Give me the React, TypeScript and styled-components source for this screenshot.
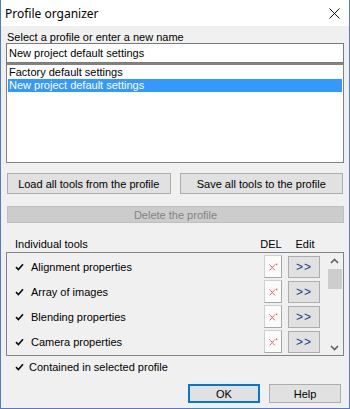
import styled, { createGlobalStyle } from 'styled-components'

const GlobalStyle = createGlobalStyle`
  html, body {
    margin: 0;
    padding: 0;
    background: #ffffff;
  }
  body {
    font-family: 'Liberation Sans', Arial, sans-serif;
    font-size: 11px;
    color: #000;
  }
`

const profiles = ['Factory default settings', 'New project default settings']
const selectedProfile = 1

const tools = [
  'Alignment properties',
  'Array of images',
  'Blending properties',
  'Camera properties',
]

function CheckIcon() {
  return (
    <svg width="9" height="8" viewBox="0 0 9 8">
      <path d="M1 4.2 L3.4 6.6 L8 1.2" fill="none" stroke="#111" strokeWidth="1.7" />
    </svg>
  )
}

function DelIcon() {
  return (
    <svg width="10" height="10" viewBox="0 0 10 10">
      <path
        d="M1.5 2.5 L7 8.5 M7 2.5 L1.5 8.5"
        fill="none"
        stroke="#c42b2b"
        strokeWidth="0.9"
        strokeDasharray="1.5 0.6"
      />
      <rect x="8.3" y="1.6" width="0.9" height="1.6" fill="#c42b2b" />
    </svg>
  )
}

function Chevron({ up }: { up: boolean }) {
  return (
    <svg width="9" height="6" viewBox="0 0 9 6">
      <path
        d={up ? 'M1 5 L4.5 1.5 L8 5' : 'M1 1 L4.5 4.5 L8 1'}
        fill="none"
        stroke="#606060"
        strokeWidth="1.6"
      />
    </svg>
  )
}

export default function App() {
  return (
    <>
      <GlobalStyle />
      <Window>
        <TitleBar>
          <Title>Profile organizer</Title>
          <CloseButton>
            <svg width="11" height="11" viewBox="0 0 11 11">
              <path d="M0.5 0.5 L10.5 10.5 M10.5 0.5 L0.5 10.5" stroke="#111" strokeWidth="1" />
            </svg>
          </CloseButton>
        </TitleBar>

        <Body>
          <Label>Select a profile or enter a new name</Label>
          <NameInput>New project default settings</NameInput>
          <ProfileList>
            {profiles.map((name, i) => (
              <ProfileItem key={name} selected={i === selectedProfile}>
                {name}
              </ProfileItem>
            ))}
          </ProfileList>

          <ButtonRow>
            <Button>Load all tools from the profile</Button>
            <Button>Save all tools to the profile</Button>
          </ButtonRow>

          <DeleteButton>Delete the profile</DeleteButton>

          <ToolsHeader>
            <HeaderName>Individual tools</HeaderName>
            <HeaderCol width={26}>DEL</HeaderCol>
            <HeaderCol width={34}>Edit</HeaderCol>
          </ToolsHeader>

          <ToolsBox>
            <ToolRows>
              {tools.map(name => (
                <ToolRow key={name}>
                  <CheckIcon />
                  <ToolName>{name}</ToolName>
                  <DelButton>
                    <DelIcon />
                  </DelButton>
                  <EditButton>&gt;&gt;</EditButton>
                </ToolRow>
              ))}
            </ToolRows>
            <ScrollBar>
              <ScrollArrow>
                <Chevron up />
              </ScrollArrow>
              <ScrollTrack>
                <ScrollThumb />
              </ScrollTrack>
              <ScrollArrow>
                <Chevron up={false} />
              </ScrollArrow>
            </ScrollBar>
          </ToolsBox>

          <Legend>
            <CheckIcon />
            <span>Contained in selected profile</span>
          </Legend>

          <Footer>
            <DialogButton isDefault>OK</DialogButton>
            <DialogButton>Help</DialogButton>
          </Footer>
        </Body>
      </Window>
    </>
  )
}

const Window = styled.div`
  width: 350px;
  height: 409px;
  box-sizing: border-box;
  border: 1px solid #4f7bc7;
  border-top: none;
  background: #f0f0f0;
  display: flex;
  flex-direction: column;
  overflow: hidden;
`

const TitleBar = styled.div`
  flex: none;
  height: 26px;
  background: #ffffff;
  display: flex;
  align-items: center;
  justify-content: space-between;
  padding: 0 8px 0 4px;
`

const Title = styled.div`
  font-family: 'Noto Sans', 'Open Sans', sans-serif;
  font-size: 12px;
  margin-top: 1px;
`

const CloseButton = styled.div`
  display: flex;
  align-items: center;
  margin-right: 1px;
`

const Body = styled.div`
  flex: 1;
  display: flex;
  flex-direction: column;
  padding: 6px 5px 0 5px;
`

const Label = styled.div`
  flex: none;
  height: 11px;
  line-height: 11px;
  padding-left: 1px;
`

const NameInput = styled.div`
  flex: none;
  height: 20px;
  box-sizing: border-box;
  border: 1px solid #7a7a7a;
  background: #fff;
  padding-left: 2px;
  line-height: 18px;
`

const ProfileList = styled.div`
  flex: none;
  height: 100px;
  box-sizing: border-box;
  border: 1px solid #828282;
  border-top: 2px solid #828282;
  background: #fff;
  padding: 1px 1px;
`

const ProfileItem = styled.div<{ selected: boolean }>`
  height: 13px;
  line-height: 13px;
  padding-left: 1px;
  background: ${p => (p.selected ? '#3399ff' : 'transparent')};
  color: ${p => (p.selected ? '#fff' : '#000')};
`

const ButtonRow = styled.div`
  flex: none;
  display: flex;
  gap: 9px;
  margin: 10px 1px 0 1px;
`

const Button = styled.div`
  flex: 1;
  height: 21px;
  box-sizing: border-box;
  border: 1px solid #adadad;
  background: #e1e1e1;
  display: flex;
  align-items: center;
  justify-content: center;
`

const DeleteButton = styled(Button)`
  flex: none;
  height: 17px;
  margin: 12px 0 0 1px;
  border-color: #bfbfbf;
  background: #cccccc;
  color: #838383;
`

const ToolsHeader = styled.div`
  flex: none;
  display: flex;
  align-items: center;
  margin-top: 13px;
  height: 15px;
  padding-left: 9px;
  padding-right: 22px;
`

const HeaderName = styled.div`
  flex: 1;
`

const HeaderCol = styled.div<{ width: number }>`
  width: ${p => p.width}px;
  text-align: center;
  margin-left: 4px;
`

const ToolsBox = styled.div`
  flex: none;
  height: 104px;
  box-sizing: border-box;
  border: 1px solid #828282;
  display: flex;
  overflow: hidden;
  margin-top: 1px;
`

const ToolRows = styled.div`
  flex: 1;
  display: flex;
  flex-direction: column;
  padding-top: 1px;
`

const ToolRow = styled.div`
  flex: none;
  height: 25px;
  display: flex;
  align-items: center;
  gap: 6px;
  padding-left: 8px;
  padding-right: 6px;
  box-sizing: border-box;
`

const ToolName = styled.div`
  flex: 1;
  margin-left: 1px;
`

const DelButton = styled.div`
  width: 18px;
  height: 23px;
  box-sizing: border-box;
  border: 1px solid #d0d0d0;
  border-right-color: #a8a8a8;
  border-bottom-color: #a8a8a8;
  background: #fbfbfb;
  display: flex;
  align-items: center;
  justify-content: center;
`

const EditButton = styled.div`
  width: 32px;
  height: 22px;
  box-sizing: border-box;
  border: 1px solid #adadad;
  background: #e1e1e1;
  color: #1f3c8e;
  display: flex;
  align-items: center;
  justify-content: center;
  letter-spacing: 1px;
  font-size: 12px;
`

const ScrollBar = styled.div`
  width: 17px;
  display: flex;
  flex-direction: column;
  background: #f0f0f0;
`

const ScrollArrow = styled.div`
  height: 14px;
  display: flex;
  align-items: center;
  justify-content: center;
  padding-top: 1px;
`

const ScrollTrack = styled.div`
  flex: 1;
  padding: 1px 1px 0 2px;
`

const ScrollThumb = styled.div`
  height: 20px;
  background: #cdcdcd;
`

const Legend = styled.div`
  flex: none;
  display: flex;
  align-items: center;
  gap: 5px;
  margin-top: 4px;
  padding-left: 9px;
  height: 14px;
`

const Footer = styled.div`
  flex: none;
  display: flex;
  justify-content: flex-end;
  gap: 9px;
  margin-top: 10px;
  padding-right: 3px;
`

const DialogButton = styled.div<{ isDefault?: boolean }>`
  width: 72px;
  height: 19px;
  box-sizing: border-box;
  border: ${p => (p.isDefault ? '2px solid #0078d7' : '1px solid #adadad')};
  background: #e1e1e1;
  display: flex;
  align-items: center;
  justify-content: center;
`
